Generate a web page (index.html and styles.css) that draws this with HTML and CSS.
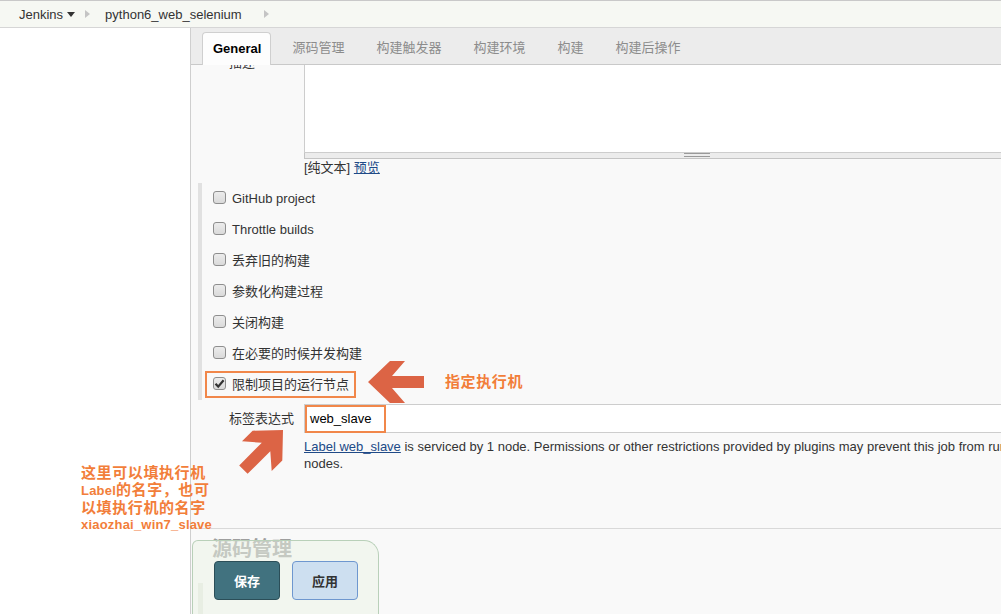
FILE: index.html
```html
<!DOCTYPE html>
<html lang="zh">
<head>
<meta charset="utf-8">
<title>python6_web_selenium Config</title>
<link rel="stylesheet" href="styles.css">
</head>
<body>
<div class="crumbs">
  <span class="crumb">Jenkins</span>
  <svg class="caret" width="8" height="5" viewBox="0 0 8 5"><path d="M0 0H8L4 5Z" fill="#333"/></svg>
  <svg class="sep sep1" width="5" height="8" viewBox="0 0 5 8"><path d="M0 0L5 4L0 8Z" fill="#c4c4c4"/></svg>
  <span class="crumb crumb2">python6_web_selenium</span>
  <svg class="sep sep2" width="5" height="8" viewBox="0 0 5 8"><path d="M0 0L5 4L0 8Z" fill="#c4c4c4"/></svg>
</div>
<div class="page">
  <aside class="side"></aside>
  <main class="main">
    <nav class="tabs">
      <span class="tab active">General</span>
      <span class="tab">源码管理</span>
      <span class="tab">构建触发器</span>
      <span class="tab">构建环境</span>
      <span class="tab">构建</span>
      <span class="tab">构建后操作</span>
    </nav>
    <div class="form">
      <div class="row row-desc">
        <div class="label label-desc">描述</div>
        <div class="field">
          <div class="ta"></div>
          <div class="grip"><span class="grip-lines"></span></div>
          <div class="preview">[纯文本] <a class="link">预览</a></div>
        </div>
      </div>
      <div class="options">
        <div class="opt"><span class="cb"></span><span>GitHub project</span></div>
        <div class="opt"><span class="cb"></span><span>Throttle builds</span></div>
        <div class="opt"><span class="cb"></span><span>丢弃旧的构建</span></div>
        <div class="opt"><span class="cb"></span><span>参数化构建过程</span></div>
        <div class="opt"><span class="cb"></span><span>关闭构建</span></div>
        <div class="opt"><span class="cb"></span><span>在必要的时候并发构建</span></div>
        <div class="opt"><span class="cb checked"><svg width="11" height="11" viewBox="0 0 11 11"><path d="M1.5 5.8L4.2 8.6L9.6 2.2" fill="none" stroke="#333" stroke-width="2.2"/></svg></span><span>限制项目的运行节点</span></div>
      </div>
      <div class="row row-label">
        <div class="label label-expr">标签表达式</div>
        <div class="field">
          <div class="inp">web_slave</div>
          <div class="help"><a class="link">Label web_slave</a> is serviced by 1 node. Permissions or other restrictions provided by plugins may prevent this job from running on those nodes.</div>
        </div>
      </div>
      <div class="hr"></div>
      <h2 class="section-title">源码管理</h2>
      <div class="section-body"></div>
    </div>
    <div class="bottom-bar">
      <button class="btn btn-save">保存</button>
      <button class="btn btn-apply">应用</button>
    </div>
  </main>
</div>

<div class="mark mark-opt"></div>
<div class="mark mark-inp"></div>
<svg class="arrow arrow-left" width="57" height="43" viewBox="0 0 57 43"><polygon points="0,21 22,0 37,0 24,15 56,15 56,27 24,27 37,42 22,42" fill="#dc6445"/></svg>
<svg class="arrow arrow-diag" width="55" height="55" viewBox="0 0 55 55"><polygon points="48,5 47.3,35.4 36.7,46 35.3,26.2 12.6,48.8 4.2,40.4 26.8,17.7 7,16.3 17.6,5.7" fill="#dc6445"/></svg>
<div class="note note-right">指定执行机</div>
<div class="note note-left">
  <div>这里可以填执行机</div>
  <div><span class="latin">Label</span>的名字，也可</div>
  <div>以填执行机的名字</div>
  <div class="latin">xiaozhai_win7_slave</div>
</div>
</body>
</html>
```
FILE: styles.css
```css
* { box-sizing: border-box; }
html, body { margin: 0; padding: 0; }
body {
  width: 1001px;
  height: 614px;
  overflow: hidden;
  position: relative;
  background: #fff;
  color: #333;
  font-family: "Liberation Sans", "Noto Sans CJK SC", sans-serif;
  font-size: 13px;
}

/* breadcrumb */
.crumbs {
  height: 28px;
  display: flex;
  align-items: center;
  padding-left: 19px;
  background: #f6f8f3;
  border-top: 1px solid #c9c9c9;
  border-bottom: 1px solid #d6d6d6;
  width: 1200px;
}
.crumb { color: #333; }
.caret { margin-left: 4px; margin-top: 1px; }
.sep1 { margin-left: 10px; }
.crumb2 { margin-left: 15px; }
.sep2 { margin-left: 22px; }

/* page */
.page {
  display: flex;
  width: 1200px;
  height: 586px;
}
.side {
  flex: none;
  width: 191px;
  background: #fff;
  border-right: 1px solid #cfcfcf;
}
.main {
  flex: 1;
  position: relative;
  overflow: hidden;
  background: #f9f9f9;
}

/* tabs */
.tabs {
  position: relative;
  z-index: 1;
  height: 37px;
  display: flex;
  align-items: flex-end;
  padding-left: 11px;
  background: #ececec;
  border-bottom: 1px solid #c9c9c9;
}
.tab {
  height: 33px;
  line-height: 31px;
  padding: 0 11px;
  margin-right: 10px;
  margin-bottom: -1px;
  color: #8c8c8c;
  white-space: nowrap;
}
.tab.active {
  background: #fdfdfd;
  color: #000;
  font-weight: bold;
  padding: 0 9px 0 10px;
  border: 1px solid #cfcfcf;
  border-bottom: none;
  border-radius: 4px 4px 0 0;
}

/* form rows */
.row {
  display: grid;
  grid-template-columns: 75px 786px;
  padding-left: 38px;
}
.label { color: #333; white-space: nowrap; }
.label-desc { margin-top: -11px; line-height: 17px; }
.ta {
  height: 88px;
  background: #fff;
  border: 1px solid #cdcdcd;
  border-top: none;
}
.grip {
  height: 6px;
  background: #ececec;
  border: 1px solid #c4c4c4;
  border-top: none;
  display: flex;
  justify-content: center;
}
.grip-lines {
  width: 26px;
  height: 4px;
  border-top: 1px solid #9a9a9a;
  border-bottom: 1px solid #9a9a9a;
}
.preview { line-height: 17px; color: #333; }
.link {
  color: #204a87;
  text-decoration: underline;
}

/* options */
.options {
  margin: 7px 0 0 7px;
  border-left: 4px solid #e1e1e1;
}
.opt {
  height: 31px;
  display: flex;
  align-items: center;
  gap: 6px;
  padding-left: 11px;
  white-space: nowrap;
  line-height: 16px;
}
.cb {
  width: 13px;
  height: 13px;
  margin-top: -3px;
  border: 1px solid #8e8e8e;
  border-radius: 3px;
  background: linear-gradient(#ececec, #dadada);
  display: flex;
  align-items: center;
  justify-content: center;
}
.cb svg { display: block; }

/* label expression */
.row-label { margin-top: 4px; }
.label-expr { line-height: 29px; }
.inp {
  height: 29px;
  line-height: 27px;
  padding-left: 5px;
  background: #fff;
  border: 1px solid #cdcdcd;
  color: #000;
}
.help {
  margin-top: 5px;
  line-height: 17px;
  color: #333;
}

.hr {
  margin: 56px 0 0 6px;
  border-top: 1px solid #d9d9d9;
}
.section-title {
  margin: 8px 0 0 21px;
  font-size: 20px;
  line-height: 24px;
  font-weight: bold;
  color: #9e9e9e;
}
.section-body {
  margin: 22px 0 0 7px;
  height: 120px;
  border-left: 5px solid #e5e8e1;
}

/* bottom sticky bar */
.bottom-bar {
  position: absolute;
  left: 1px;
  top: 512px;
  width: 187px;
  height: 100px;
  display: flex;
  gap: 12px;
  padding: 20px 0 0 21px;
  background: rgba(236, 244, 230, 0.5);
  border: 1px solid #b9d0b9;
  border-bottom: none;
  border-radius: 6px 15px 0 0;
}
.btn {
  width: 66px;
  height: 39px;
  border-radius: 4px;
  font-family: "Liberation Sans", "Noto Sans CJK SC", sans-serif;
  font-size: 13px;
  font-weight: bold;
  padding: 0;
}
.btn-save {
  background: #41727f;
  border: 1px solid #2b4e58;
  color: #fff;
}
.btn-apply {
  background: #cddff0;
  border: 1px solid #6e97cf;
  color: #333;
}

/* annotations */
.mark {
  position: absolute;
  border: 2px solid #f1874a;
}
.mark-opt { left: 205px; top: 371px; width: 151px; height: 27px; }
.mark-inp { left: 305px; top: 405px; width: 81px; height: 28px; }
.arrow { position: absolute; display: block; }
.arrow-left { left: 368px; top: 361px; }
.arrow-diag { left: 235px; top: 425px; }
.note {
  position: absolute;
  color: #f27e3a;
  font-weight: bold;
  font-family: "Liberation Sans", "Noto Sans CJK SC", sans-serif;
}
.note-right {
  left: 445px;
  top: 372px;
  font-size: 15px;
  line-height: 20px;
  letter-spacing: 0.6px;
}
.note-left {
  left: 81px;
  top: 464px;
  font-size: 15px;
  line-height: 17px;
  letter-spacing: 0.6px;
}
.note-left .latin { font-size: 13px; letter-spacing: 0.2px; }
```
